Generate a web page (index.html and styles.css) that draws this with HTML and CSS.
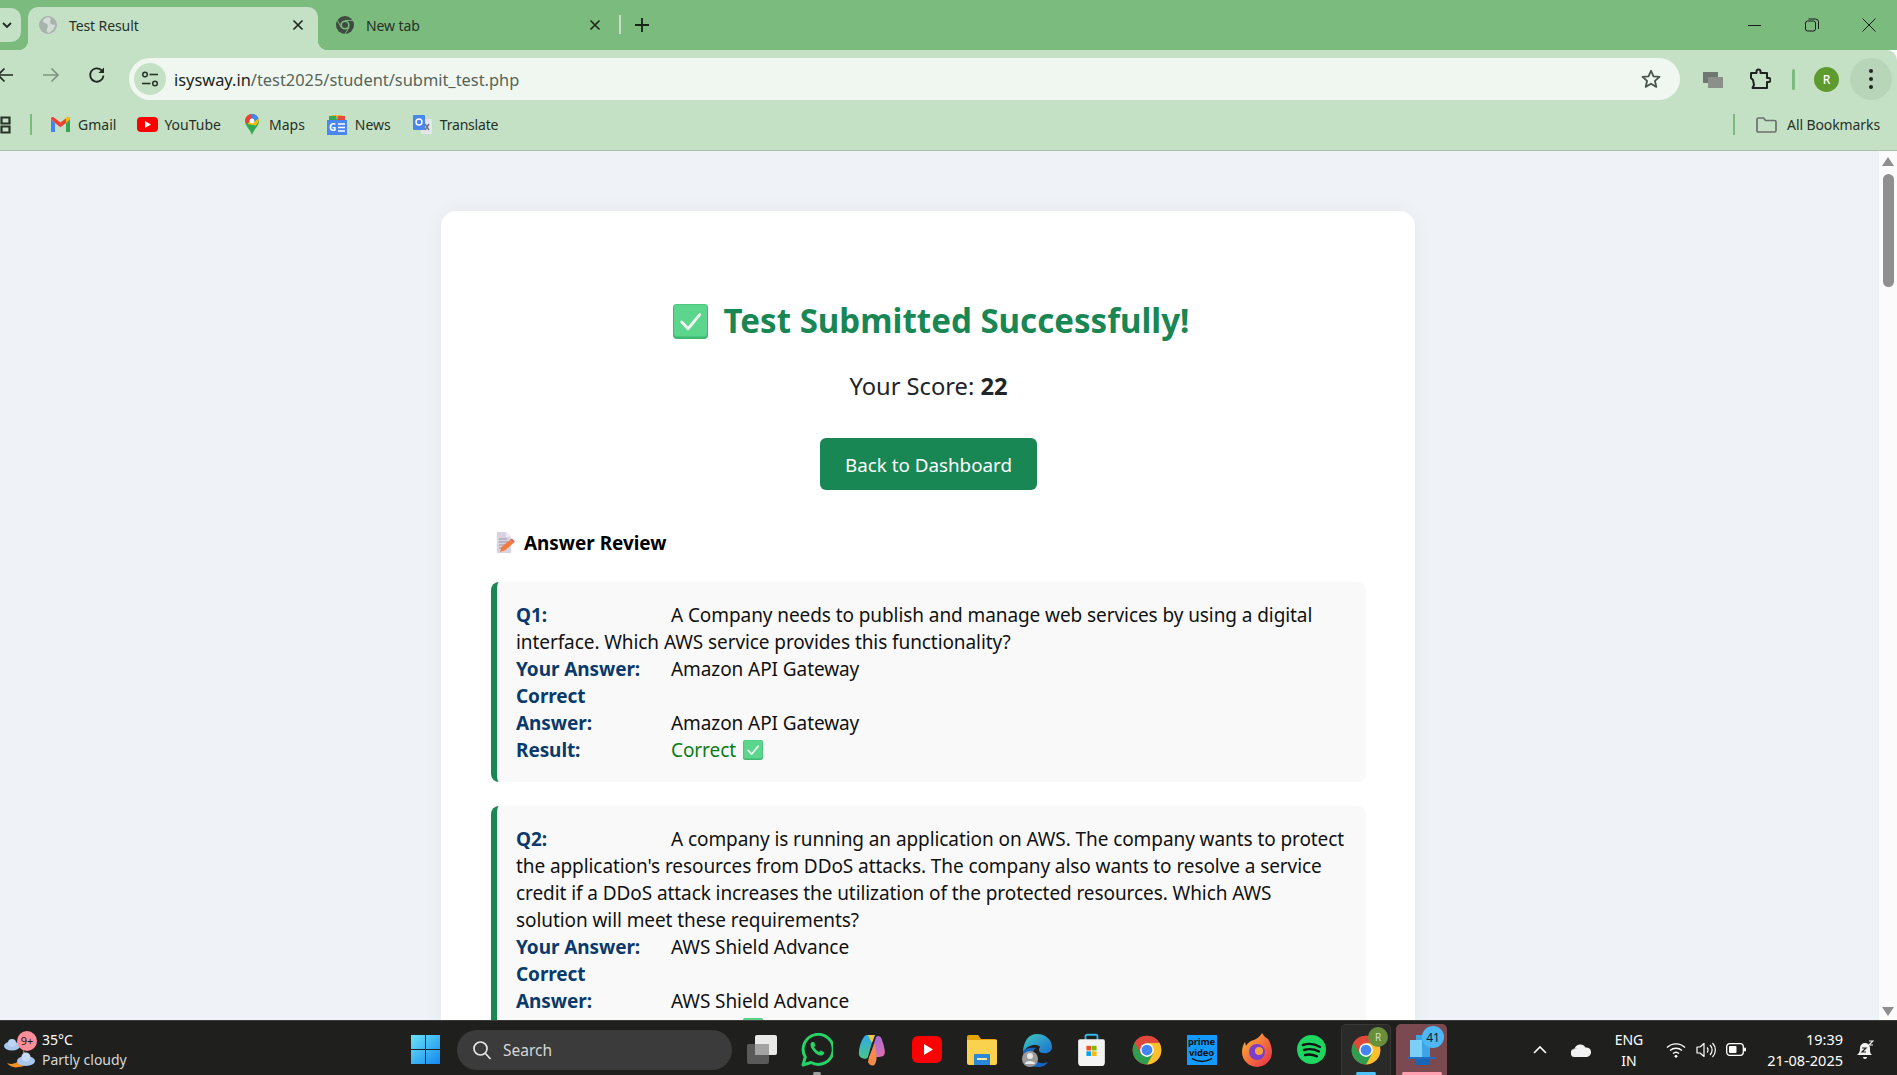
FILE: index.html
```html
<!DOCTYPE html>
<html lang="en">
<head>
<meta charset="utf-8">
<title>Test Result</title>
<link rel="stylesheet" href="styles.css">
</head>
<body>
<svg class="defs" width="0" height="0" aria-hidden="true">
  <defs>
    <symbol id="check" viewBox="0 0 36 36">
      <rect x="0" y="0" width="36" height="36" rx="4" fill="#3fb872"/>
      <rect x="1" y="0.5" width="34" height="33" rx="3.5" fill="#5cd68d"/>
      <path d="M9 18.5l6.5 7L27.5 11" fill="none" stroke="#eef8f0" stroke-width="3" stroke-linecap="round" stroke-linejoin="round"/>
    </symbol>
    <symbol id="chrome" viewBox="0 0 48 48">
      <circle cx="24" cy="24" r="23" fill="#db4437"/>
      <path d="M24 47a23 23 0 0 0 19.9-34.5H24z" fill="#fbc02d"/>
      <path d="M4.1 12.5A23 23 0 0 0 24 47l10-17.3L24 12.5z" fill="#2e9e4f"/>
      <path d="M24 1A23 23 0 0 0 4.1 12.5L14 30 24 12.5h19.9A23 23 0 0 0 24 1z" fill="#e0483b"/>
      <circle cx="24" cy="24" r="11" fill="#fff"/>
      <circle cx="24" cy="24" r="8.6" fill="#4285f4"/>
    </symbol>
  </defs>
</svg>
<div class="screen">

  <header class="tabstrip">
    <div class="tabsearch"><svg width="12" height="12" viewBox="0 0 12 12"><path d="M2 4l4 4 4-4" fill="none" stroke="#1f2a1f" stroke-width="1.8"/></svg></div>
    <div class="tab tab-active">
      <svg class="favicon" width="18" height="18" viewBox="0 0 18 18"><circle cx="9" cy="9" r="9" fill="#a9b3ad"/><path d="M9 1c-2 1-5 2-5 4s3 2 4 3 1 3 0 5 1 4 2 4c3-2 6-5 6-8-1-1-3 0-4-1s-1-3 0-5C11 2 10 1 9 1z" fill="#d3dcd5"/></svg>
      <span class="tab-title">Test Result</span>
      <svg class="tab-close" width="12" height="12" viewBox="0 0 12 12"><path d="M1.5 1.5l9 9m0-9l-9 9" stroke="#1f2a1f" stroke-width="1.7"/></svg>
    </div>
    <div class="tab">
      <svg class="favicon" width="18" height="18" viewBox="0 0 18 18"><circle cx="9" cy="9" r="9" fill="#3f4a40"/><circle cx="9" cy="9" r="4.6" fill="#7bbb7d"/><circle cx="9" cy="9" r="3" fill="#3f4a40"/><path d="M9 4.4h8M5 11.3L1.5 4.5M13 11.3L9 18" stroke="#7bbb7d" stroke-width="1"/></svg>
      <span class="tab-title">New tab</span>
      <svg class="tab-close" width="12" height="12" viewBox="0 0 12 12"><path d="M1.5 1.5l9 9m0-9l-9 9" stroke="#1f2a1f" stroke-width="1.7"/></svg>
    </div>
    <span class="tab-sep"></span>
    <svg class="newtab" width="14" height="14" viewBox="0 0 14 14"><path d="M7 0v14M0 7h14" stroke="#16211a" stroke-width="1.8"/></svg>
    <div class="winctl">
      <svg width="14" height="14" viewBox="0 0 14 14"><path d="M0 7.5h13" stroke="#1a1a1a" stroke-width="1"/></svg>
      <svg width="14" height="14" viewBox="0 0 14 14"><rect x="0.5" y="3" width="10" height="10" rx="2" fill="none" stroke="#1a1a1a"/><path d="M3.5 1h7a3 3 0 0 1 3 3v7" fill="none" stroke="#1a1a1a"/></svg>
      <svg width="14" height="14" viewBox="0 0 14 14"><path d="M0.5 0.5l13 13m0-13l-13 13" stroke="#1a1a1a" stroke-width="1"/></svg>
    </div>
  </header>

  <nav class="toolbar">
    <div class="navbtns">
      <svg class="navbtn" width="18" height="18" viewBox="0 0 18 18"><path d="M17 9H2M8.5 2.5L2 9l6.500 6.500" fill="none" stroke="#1f2a1f" stroke-width="1.700"/></svg>
      <svg class="navbtn" width="18" height="18" viewBox="0 0 18 18"><path d="M1 9h15M9.500 2.500L16 9l-6.500 6.500" fill="none" stroke="#7f9480" stroke-width="1.700"/></svg>
      <svg class="navbtn" width="18" height="18" viewBox="0 0 18 18"><path d="M15.500 9.500a6.700 6.700 0 1 1-2-5.300l2 2" fill="none" stroke="#1f2a1f" stroke-width="1.800"/><path d="M16 1.500V7h-5.500z" fill="#1f2a1f"/></svg>
    </div>
    <div class="omnibox">
      <span class="siteinfo"><svg width="18" height="18" viewBox="0 0 18 18"><circle cx="4" cy="4.500" r="2.300" fill="none" stroke="#28332a" stroke-width="1.500"/><path d="M8.500 4.500H17" stroke="#28332a" stroke-width="1.600"/><path d="M1 13.500h8.500" stroke="#28332a" stroke-width="1.600"/><circle cx="14" cy="13.500" r="2.300" fill="none" stroke="#28332a" stroke-width="1.500"/></svg></span>
      <span class="url"><span class="url-host">isysway.in</span>/test2025/student/submit_test.php</span>
      <svg class="star" width="22" height="22" viewBox="0 0 24 24"><path d="M12 3l2.700 6.100 6.600.6-5 4.400 1.500 6.500L12 17.200l-5.800 3.400 1.500-6.500-5-4.400 6.600-.6z" fill="none" stroke="#4a554c" stroke-width="2" stroke-linejoin="round"/></svg>
    </div>
    <div class="actions">
      <svg class="act-stack" width="20" height="18" viewBox="0 0 20 18"><rect x="0" y="2" width="15" height="11" fill="#6f7771"/><rect x="5" y="7" width="15" height="11" fill="#8a918b"/></svg>
      <svg class="act-puzzle" width="22" height="22" viewBox="0 0 22 22"><path d="M2 5h5.500V3.500a2 2 0 0 1 4 0V5H18v5h1.500a2 2 0 0 1 0 4H18v6H3.500l1.500-3-1-5-2-2z" fill="none" stroke="#1d241e" stroke-width="2" stroke-linejoin="round"/></svg>
      <span class="green-sep"></span>
      <span class="avatar">R</span>
      <span class="menubtn"><i></i><i></i><i></i></span>
    </div>
  </nav>

  <nav class="bookmarks">
    <svg class="apps" width="11" height="18" viewBox="0 0 11 18"><path d="M1.500 1.500h8v6h-8zM1.500 10.500h8v6h-8z" fill="none" stroke="#28332a" stroke-width="2.200"/></svg>
    <span class="bm-sep"></span>
    <a class="bm bm-gmail"><svg width="19" height="15" viewBox="0 0 19 15"><path d="M0 2v13h4V6z" fill="#4285f4"/><path d="M15 6v9h4V2z" fill="#34a853"/><path d="M0 2l4 4 5.500 4.200L15 6l4-4c0-2-2-2.500-3-1.500l-6.500 5L3 .5C2 -.5 0 0 0 2z" fill="#ea4335"/><path d="M15 6l4-4c0-2-2-2.500-3-1.500L15 1.300z" fill="#fbbc04"/></svg><span>Gmail</span></a>
    <a class="bm bm-yt"><svg width="21" height="15" viewBox="0 0 21 15"><rect width="21" height="15" rx="4" fill="#f00"/><path d="M8 4v7l6-3.500z" fill="#fff"/></svg><span>YouTube</span></a>
    <a class="bm bm-maps"><svg width="14" height="21" viewBox="0 0 14 21"><path d="M7 0a7 7 0 0 0-7 7c0 5 5 8 7 14 2-6 7-9 7-14a7 7 0 0 0-7-7z" fill="#34a853"/><path d="M1 3.500A7 7 0 0 1 7 0v4.500L2.500 10C1 8.500 0 8 0 7a7 7 0 0 1 1-3.500z" fill="#ea4335"/><path d="M7 0a7 7 0 0 1 6.500 4.500L9 8 7 4.500z" fill="#4285f4"/><path d="M2.500 10L5 7l4 1 4.500-3.500C14.500 7 13 9 11 11.500z" fill="#fbbc04"/><circle cx="7" cy="7" r="2.400" fill="#fff"/></svg><span>Maps</span></a>
    <a class="bm bm-news"><svg width="20" height="20" viewBox="0 0 20 20"><path d="M3 3l2-3h10l2 3z" fill="#e8b23a"/><path d="M2 1h7l1 4H2z" fill="#34a853"/><path d="M11 1h7v4h-8z" fill="#e34c3c"/><rect y="5" width="20" height="15" fill="#4a86ee"/><text x="2" y="16" class="news-g">G</text><path d="M11 9h7M11 12.500h7M11 16h7" stroke="#fff" stroke-width="1.700"/></svg><span>News</span></a>
    <a class="bm bm-tr"><svg width="19" height="20" viewBox="0 0 19 20"><rect x="8" y="4" width="11" height="15" fill="#e4e7ea"/><rect width="12" height="15" rx="1" fill="#4a86ee"/><circle cx="6" cy="7" r="3" fill="none" stroke="#fff" stroke-width="1.400"/><path d="M12 9l4 6m0-6l-4 6" stroke="#6b7278" stroke-width="1.400"/></svg><span>Translate</span></a>
    <span class="bm-fill"></span>
    <span class="bm-sep"></span>
    <a class="bm bm-all"><svg width="21" height="16" viewBox="0 0 21 16"><path d="M1 2.500a1.500 1.500 0 0 1 1.500-1.500h5l2 2.500h9a1.500 1.500 0 0 1 1.500 1.500v8.500a1.500 1.500 0 0 1-1.500 1.500h-16A1.500 1.500 0 0 1 1 13z" fill="none" stroke="#6b716c" stroke-width="1.700"/></svg><span>All Bookmarks</span></a>
  </nav>

  <div class="viewport">
    <main class="page">
      <section class="card">
        <h1 class="title"><svg class="title-check" width="35" height="35"><use href="#check"/></svg>Test Submitted Successfully!</h1>
        <p class="score">Your Score: <strong>22</strong></p>
        <div class="btnrow"><a class="btn">Back to Dashboard</a></div>
        <h2 class="review">
          <svg class="memo" width="18" height="21" viewBox="0 0 18 21"><path d="M0 0h9l5 5v16H0z" fill="#d9d2e0"/><path d="M9 0l5 5H9z" fill="#ecebf1"/><path d="M2 7h8M2 10h9M2 13h7M2 16h5" stroke="#9d95a8" stroke-width="1"/><path d="M3 20l1.500-5L13 8l3.500 3-8 7z" fill="#f47a3a"/><path d="M13 8l1.800-1.500 3 3L16.500 11z" fill="#e85d5d"/></svg>
          Answer Review
        </h2>

        <article class="qa">
          <span class="lbl">Q1:</span>A Company needs to publish and manage web services by using a digital interface. Which AWS service provides this functionality?<br>
          <span class="lbl">Your Answer:</span>Amazon API Gateway<br>
          <span class="lbl">Correct Answer:</span>Amazon API Gateway<br>
          <span class="lbl">Result:</span><span class="ok">Correct</span> <svg class="mini-check" width="20" height="20"><use href="#check"/></svg>
        </article>

        <article class="qa">
          <span class="lbl">Q2:</span>A company is running an application on AWS. The company wants to protect the application's resources from DDoS attacks. The company also wants to resolve a service credit if a DDoS attack increases the utilization of the protected resources. Which AWS solution will meet these requirements?<br>
          <span class="lbl">Your Answer:</span>AWS Shield Advance<br>
          <span class="lbl">Correct Answer:</span>AWS Shield Advance<br>
          <span class="lbl">Result:</span><span class="ok">Correct</span> <svg class="mini-check" width="20" height="20"><use href="#check"/></svg>
        </article>
      </section>
    </main>
    <aside class="scrollbar">
      <svg width="12" height="9" viewBox="0 0 12 9"><path d="M6 0l6 9H0z" fill="#8f8f8f"/></svg>
      <span class="thumb"></span>
      <span class="track-fill"></span>
      <svg width="12" height="9" viewBox="0 0 12 9"><path d="M6 9L0 0h12z" fill="#8f8f8f"/></svg>
    </aside>
  </div>

  <footer class="taskbar">
    <div class="weather">
      <span class="weather-icon">
        <svg width="32" height="38" viewBox="0 0 32 38"><path d="M20 18a12 12 0 0 1-16 14 12 12 0 0 0 12 4c6 0 9-4 9-8z" fill="#f0912a"/><ellipse cx="9" cy="15" rx="8" ry="4.500" fill="#a9c6ee"/><ellipse cx="9" cy="12" rx="4" ry="4" fill="#bdd4f3"/><ellipse cx="23" cy="30" rx="9" ry="5" fill="#a9c6ee"/><ellipse cx="23" cy="26" rx="4.500" ry="4.500" fill="#c7dbf5"/></svg>
        <span class="badge-9">9+</span>
      </span>
      <span class="weather-text"><span class="temp">35°C</span><span class="cond">Partly cloudy</span></span>
    </div>
    <svg class="winlogo" width="29" height="29" viewBox="0 0 29 29"><defs><linearGradient id="w" x1="0" y1="0" x2="1" y2="1"><stop offset="0" stop-color="#6be3f7"/><stop offset="1" stop-color="#1488f0"/></linearGradient></defs><path d="M0 0h14v14H0zM15 0h14v14H15zM0 15h14v14H0zM15 15h14v14H15z" fill="url(#w)"/></svg>
    <div class="search"><svg width="20" height="20" viewBox="0 0 20 20"><circle cx="8.500" cy="8.500" r="6.500" fill="none" stroke="#e8e8e8" stroke-width="1.700"/><path d="M13.500 13.500l5 5.500" stroke="#e8e8e8" stroke-width="1.700"/></svg><span>Search</span></div>
    <svg class="taskview" width="30" height="29" viewBox="0 0 30 29"><rect x="0" y="9" width="22" height="20" rx="2" fill="#5a5a5a"/><rect x="8" y="0" width="22" height="20" rx="2" fill="#e9e9e9"/><rect x="8" y="9" width="14" height="11" fill="#a3a3a3"/></svg>
    <div class="apps-row">
      <span class="app"><svg width="32" height="34" viewBox="0 0 32 34"><path d="M2 32l2.300-8A15 15 0 1 1 10 29.500z" fill="none" stroke="#25d366" stroke-width="3" stroke-linejoin="round"/><path d="M11 9c-2 1-2 4 0 7s5 6 8 6.500 5-2 4-3.500l-3.500-1.500-1.500 1.500c-2-1-4-3-5-5l1.500-1.500L13 9z" fill="#25d366"/></svg><i class="dot"></i></span>
      <span class="app"><svg width="28" height="33" viewBox="0 0 28 33"><defs><linearGradient id="cp1" x1="0" y1="0" x2="0" y2="1"><stop offset="0" stop-color="#2fa9e8"/><stop offset="1" stop-color="#4bc48a"/></linearGradient><linearGradient id="cp2" x1="0" y1="0" x2="1" y2="1"><stop offset="0" stop-color="#8a6de8"/><stop offset="1" stop-color="#ee6fa8"/></linearGradient></defs><path d="M8 2h8l-6 22c-1 3-8 2-9-2-1-6 3-18 7-20z" fill="url(#cp1)"/><path d="M18 4c2-2 5-1 6 3 2 6 4 13 2 15-1 2-6 2-9 2L11 26z" fill="url(#cp2)"/><path d="M11 24l6-14c1 8 3 16 0 21-2 3-6 1-7-2z" fill="#f58a4b"/><path d="M10 2h7l-3 8z" fill="#f6c64a"/></svg></span>
      <span class="app"><svg width="30" height="27" viewBox="0 0 30 27"><rect width="30" height="27" rx="6" fill="#f00"/><path d="M12 8v11l9-5.500z" fill="#fff"/></svg></span>
      <span class="app"><svg width="30" height="30" viewBox="0 0 30 30"><path d="M0 2a2 2 0 0 1 2-2h9l3 4h14a2 2 0 0 1 2 2v4H0z" fill="#e5a50a"/><path d="M0 5h30v23a2 2 0 0 1-2 2H2a2 2 0 0 1-2-2z" fill="#fbd24e"/><path d="M8 19h14a1 1 0 0 1 1 1v10H7V20a1 1 0 0 1 1-1z" fill="#2b87d8"/><rect x="10" y="23" width="10" height="2" fill="#fbe9a0"/></svg></span>
      <span class="app"><svg width="30" height="34" viewBox="0 0 30 34"><defs><linearGradient id="ed" x1="0" y1="0" x2="1" y2="1"><stop offset="0" stop-color="#3fc9c0"/><stop offset="1" stop-color="#1a6fd0"/></linearGradient></defs><path d="M15 1c9 0 15 6 15 13 0 5-5 7-9 6-4 0-5-3-3-6-3-4-14-2-17 6C1 8 7 1 15 1z" fill="url(#ed)"/><path d="M1 20c0 8 7 14 15 14 5 0 8-2 10-5-7 3-15 0-15-8 0-3 1-5 3-6-5-1-13 0-13 5z" fill="#1565c0"/><circle cx="8" cy="26" r="8" fill="#9b9b9b"/><circle cx="8" cy="23" r="3" fill="#e8e8e8"/><path d="M3 31c0-4 10-4 10 0z" fill="#e8e8e8"/></svg></span>
      <span class="app"><svg width="29" height="35" viewBox="0 0 29 38"><path d="M8 9V5a2 2 0 0 1 2-2h9a2 2 0 0 1 2 2v4" fill="none" stroke="#35b7e6" stroke-width="2"/><path d="M0 10a2 2 0 0 1 2-2h25a2 2 0 0 1 2 2v23a4 4 0 0 1-4 4H4a4 4 0 0 1-4-4z" fill="#f4f4f4"/><rect x="9" y="15" width="5" height="5" fill="#f25022"/><rect x="15" y="15" width="5" height="5" fill="#7fba00"/><rect x="9" y="21" width="5" height="5" fill="#00a4ef"/><rect x="15" y="21" width="5" height="5" fill="#ffb900"/></svg></span>
      <span class="app"><svg width="30" height="30"><use href="#chrome"/></svg></span>
      <span class="app"><span class="prime"><span>prime</span><span>video</span><svg width="22" height="5" viewBox="0 0 22 5"><path d="M1 .5c6 4 14 4 20 0" fill="none" stroke="#111" stroke-width="1.500"/></svg></span></span>
      <span class="app"><svg width="30" height="34" viewBox="0 0 30 34"><defs><linearGradient id="ff" x1="0" y1="0" x2="1" y2="1"><stop offset="0" stop-color="#ffbd2e"/><stop offset="1" stop-color="#e8274b"/></linearGradient></defs><path d="M20 0c2 3 3 4 6 6 2 3 4 8 4 13a15 15 0 0 1-30 0c0-4 1-7 3-10l1 4c1-2 3-4 5-5 4-1 8-3 11-8z" fill="url(#ff)"/><circle cx="15" cy="19" r="8" fill="#7b3fcb"/><circle cx="17" cy="18" r="4" fill="#f8a13a"/></svg></span>
      <span class="app"><svg width="29" height="29" viewBox="0 0 29 29"><circle cx="14.500" cy="14.500" r="14.500" fill="#1ed760"/><path d="M6 10c6-2 12-1 17 2M7 15c5-1.500 10-1 15 1.500M8 20c4-1 8-.5 12 1.300" fill="none" stroke="#121212" stroke-width="2.400" stroke-linecap="round"/></svg></span>
      <span class="app app-running"><svg width="30" height="30"><use href="#chrome"/></svg><span class="avatar-mini">R</span><i class="run run-blue"></i></span>
      <span class="app app-mail"><svg width="28" height="30" viewBox="0 0 28 30"><rect x="8" y="0" width="14" height="22" fill="#3da4e6"/><rect x="2" y="5" width="12" height="17" fill="#7dd0f5"/><path d="M0 22h28v2H0z" fill="#1e6fc2"/><rect x="8" y="24" width="14" height="6" fill="#1666b5"/></svg><span class="badge-41">41</span><i class="run run-pink"></i></span>
    </div>
    <div class="tray">
      <svg class="tray-chev" width="14" height="9" viewBox="0 0 14 9"><path d="M1 8l6-6 6 6" fill="none" stroke="#fff" stroke-width="1.600"/></svg>
      <svg class="tray-cloud" width="20" height="14" viewBox="0 0 20 14"><path d="M4 14a4 4 0 0 1-.500-8 6 6 0 0 1 11-1.500A4.500 4.500 0 0 1 16 14z" fill="#f2f2f2"/><path d="M0 9a4 4 0 0 1 7-2.500L5 5 3.500 6A4 4 0 0 0 0 9z" fill="#9a9a9a"/></svg>
      <div class="lang"><span>ENG</span><span>IN</span></div>
      <svg class="tray-wifi" width="20" height="16" viewBox="0 0 20 16"><path d="M1 5.500a13 13 0 0 1 18 0M4 8.500a9 9 0 0 1 12 0M7 11.500a4.500 4.500 0 0 1 6 0" fill="none" stroke="#fff" stroke-width="1.400"/><circle cx="10" cy="14.300" r="1.400" fill="#fff"/></svg>
      <svg class="tray-vol" width="20" height="16" viewBox="0 0 20 16"><path d="M1 5h3l4-3.500v13L4 11H1z" fill="none" stroke="#fff" stroke-width="1.200" stroke-linejoin="round"/><path d="M11 5.500a3.500 3.500 0 0 1 0 5M14 3a7 7 0 0 1 0 10M16.500 1a10 10 0 0 1 0 14" fill="none" stroke="#fff" stroke-width="1.200"/></svg>
      <svg class="tray-bat" width="20" height="13" viewBox="0 0 20 13"><rect x="0.700" y="0.700" width="16.600" height="11.600" rx="3" fill="none" stroke="#fff" stroke-width="1.300"/><rect x="3" y="3" width="7.500" height="7" rx="1" fill="#fff"/><rect x="18" y="4.500" width="2" height="4" rx="1" fill="#fff"/></svg>
      <div class="clock"><span>19:39</span><span>21-08-2025</span></div>
      <svg class="tray-bell" width="17" height="20" viewBox="0 0 17 20"><path d="M8 3a5 5 0 0 0-5 5c0 4-1 5-3 7h15c-2-2-2-3-2-7a5 5 0 0 0-5-5z" fill="#f4f4f4"/><path d="M6 17h4a2 2 0 0 1-4 0z" fill="#f4f4f4"/><path d="M5 8h4l-4 4h4" fill="none" stroke="#1f1f1f" stroke-width="1.200"/><path d="M12 1h4l-4 4h4" fill="none" stroke="#f4f4f4" stroke-width="1.200"/></svg>
    </div>
  </footer>
</div>
</body>
</html>
```

FILE: styles.css
```css
* { box-sizing: border-box; }
html, body { margin: 0; padding: 0; height: 100%; overflow: hidden; }
body { font-family: "Noto Sans", "Open Sans", sans-serif; color: #212529; }
.defs { display: block; height: 0; }
svg { display: block; flex: none; }
.screen { width: 1897px; height: 1075px; display: flex; flex-direction: column; overflow: hidden; }

/* tabs */
.tabstrip { height: 50px; flex: none; background: #7bbb7d; display: flex; align-items: flex-end; position: relative; }
.tabsearch { width: 21px; height: 34px; margin-bottom: 8px; background: #c5e1c5; border-radius: 0 10px 10px 0; display: flex; align-items: center; justify-content: flex-end; padding-right: 8px; }
.tab { height: 43px; display: flex; align-items: center; font-size: 14px; color: #263128; position: relative; padding-bottom: 7px !important; }
.tab-active { width: 290px; margin-left: 7px; padding: 0 14px 0 11px; background: #c5e1c5; border-radius: 10px 10px 0 0; }
.tab-active::before, .tab-active::after { content: ""; position: absolute; bottom: 0; width: 10px; height: 10px; }
.tab-active::before { left: -10px; background: radial-gradient(circle at 0 0, transparent 10px, #c5e1c5 10.5px); }
.tab-active::after { right: -10px; background: radial-gradient(circle at 100% 0, transparent 10px, #c5e1c5 10.5px); }
.tab:not(.tab-active) { width: 297px; padding: 0 14px 0 18px; }
.favicon { margin-right: 12px; }
.tab-title { flex: 1; letter-spacing: -0.1px; }
.tab-sep { width: 2px; height: 19px; margin: 0 0 16px 4px; background: #c5e1c5; }
.newtab { margin: 0 0 18px 14px; }
.winctl { margin-left: auto; display: flex; gap: 43px; padding: 0 21px 18px 0; }

/* toolbar */
.toolbar { height: 50px; flex: none; background: #c5e1c5; display: flex; align-items: center; border-radius: 0 10px 0 0; }
.navbtns { display: flex; margin-left: -18px; width: 147px; flex: none; }
.navbtn { margin: 0 14px; }
.omnibox { width: 1551px; height: 42px; margin-top: 10px; margin-bottom: 2px; flex: none; background: #f0f7f0; border-radius: 21px; display: flex; align-items: center; padding: 0 18px 0 5px; }
.siteinfo { width: 32px; height: 32px; border-radius: 50%; background: #c5e1c5; display: flex; align-items: center; justify-content: center; }
.url { flex: 1; margin-left: 8px; font-size: 16.400px; color: #566558; }
.url-host { color: #1b241d; }
.actions { display: flex; align-items: center; margin-top: 8px; flex: 1; padding-left: 23px; }
.act-puzzle { margin-left: 26px; }
.green-sep { width: 3px; height: 21px; margin-left: 21px; background: #7bbb7d; border-radius: 2px; }
.avatar { width: 25px; height: 25px; margin-left: 19px; border-radius: 50%; background: #5f9a2e; color: #fff; font-size: 12px; display: flex; align-items: center; justify-content: center; font-weight: 500; }
.menubtn { width: 42px; height: 42px; margin-left: 11px; border-radius: 50%; background: #b8d4b9; display: flex; flex-direction: column; align-items: center; justify-content: center; gap: 4px; }
.menubtn i { width: 4px; height: 4px; background: #1d241e; border-radius: 50%; }

/* bookmarks */
.bookmarks { height: 51px; flex: none; background: #c5e1c5; border-bottom: 1px solid #a9bfa9; display: flex; align-items: center; font-size: 14px; color: #263128; padding-bottom: 1px; }
.apps { margin-right: 19px; }
.bm-sep { width: 2px; height: 21px; background: #7bbb7d; }
.bm { display: flex; align-items: center; gap: 8px; }
.bm-gmail { margin-left: 19px; }
.bm-yt { margin-left: 21px; gap: 6px; }
.bm-maps { margin-left: 24px; gap: 10px; }
.bm-news { margin-left: 22px; }
.bm-tr { margin-left: 22px; gap: 8px; letter-spacing: -0.2px; }
.bm-fill { flex: 1; }
.bm-all { margin: 0 17px 0 21px; gap: 10px; letter-spacing: -0.1px; }
.news-g { font: 700 10px "Noto Sans", sans-serif; fill: #fff; }

/* page */
.viewport { flex: 1; min-height: 0; display: flex; background: #eff3f8; }
.page { flex: 1; min-width: 0; overflow: hidden; padding: 60px 464px 0 441px; }
.card { background: #fff; border-radius: 15px; box-shadow: 0 0 20px rgba(0, 0, 0, 0.05); padding: 85px 49px 40px 50px; }
.title { margin: 0; display: flex; justify-content: center; align-items: center; gap: 16px; font-size: 33.100px; line-height: 50px; font-weight: 700; color: #198754; padding-left: 5px; height: 50px; }
.title-check { width: 35px; height: 35px; }
.score { margin: 20px 0 0; text-align: center; font-size: 23.700px; line-height: 40px; color: #212529; }
.score strong { font-weight: 700; }
.btnrow { margin-top: 32px; display: flex; justify-content: center; }
.btn { width: 217px; height: 52px; background: #198754; color: #fff; border-radius: 6px; font-size: 18.800px; display: flex; align-items: center; justify-content: center; padding-top: 2px; }
.review { margin: 35px 0 0; height: 36px; display: flex; align-items: center; gap: 9px; padding-left: 6px; font-size: 18.900px; font-weight: 700; color: #000; }
.qa { margin-top: 21px; background: #f9f9f9; border-left: 6px solid #198754; border-radius: 8px; padding: 20px 21px 18px 19px; font-size: 19px; line-height: 27px; letter-spacing: -0.08px; color: #111; }
.qa + .qa { margin-top: 24px; }
.lbl { display: inline-block; width: 150px; margin-right: 5px; color: #0a3a6b; font-weight: 700; }
.ok { color: #0a7d16; }
.mini-check { display: inline-block; width: 20px; height: 20px; vertical-align: -3px; margin-left: 2px; }
.memo { margin-top: -1px; }

/* scrollbar */
.scrollbar { width: 18px; flex: none; background: #fbfbfb; display: flex; flex-direction: column; align-items: center; padding: 6px 0 4px; }
.thumb { width: 11px; height: 113px; margin-top: 8px; border-radius: 6px; background: #8f8f8f; }
.track-fill { flex: 1; }

/* taskbar */
.taskbar { height: 55px; flex: none; background: #1f1f1d; border-top: 1px solid #3a3a38; display: flex; align-items: center; color: #fff; padding-top: 3px; }
.weather { width: 411px; flex: none; display: flex; align-items: center; padding-left: 3px; }
.weather-icon { width: 32px; height: 38px; position: relative; }
.badge-9 { position: absolute; left: 14px; top: 0; width: 20px; height: 20px; border-radius: 50%; background: #ff8e99; color: #1a1a1a; font-size: 11px; display: flex; align-items: center; justify-content: center; }
.weather-text { margin-left: 7px; display: flex; flex-direction: column; font-size: 14px; line-height: 20px; }
.cond { color: #d8d8d8; }
.search { width: 275px; height: 40px; margin-left: 17px; flex: none; background: #3b3b3b; border-radius: 20px; display: flex; align-items: center; gap: 11px; padding-left: 15px; font-size: 15.500px; color: #d6d6d6; }
.taskview { margin-left: 15px; }
.apps-row { display: flex; margin-left: 12px; height: 51px; }
.app { width: 55px; height: 51px; display: flex; align-items: center; justify-content: center; position: relative; flex: none; }
.dot { position: absolute; bottom: 0; width: 8px; height: 3px; border-radius: 2px; background: #9d9d9d; }
.prime { width: 30px; height: 30px; background: #1399ff; color: #111; display: flex; flex-direction: column; align-items: center; justify-content: center; font-size: 9.500px; line-height: 11px; font-weight: 700; letter-spacing: -0.2px; }
.app-running { width: 50px; margin-left: 2px; background: #2a2b28; border: 1px solid #383936; border-bottom: 0; border-radius: 5px 5px 0 0; }
.avatar-mini { position: absolute; right: 2px; top: 2px; width: 20px; height: 20px; border-radius: 50%; background: #6a8f3c; color: #cfe0b8; font-size: 10px; display: flex; align-items: center; justify-content: center; }
.run { position: absolute; bottom: 0; height: 3px; border-radius: 2px; }
.run-blue { width: 20px; background: #4fc3f7; }
.app-mail { width: 51px; margin-left: 5px; background: #7a4a50; border-radius: 5px 5px 0 0; }
.run-pink { width: 40px; background: #ff9fb0; }
.badge-41 { position: absolute; right: 3px; top: 2px; width: 22px; height: 22px; border-radius: 50%; background: #4db8f5; color: #10202c; font-size: 12px; display: flex; align-items: center; justify-content: center; }
.tray { flex: 1; display: flex; align-items: center; position: relative; font-size: 14px; line-height: 21px; }
.tray-chev { margin-left: 86px; }
.tray-cloud { margin-left: 24px; }
.lang { width: 48px; margin-left: 14px; display: flex; flex-direction: column; align-items: center; }
.tray-wifi { margin-left: 13px; }
.tray-vol { margin-left: 10px; }
.tray-bat { margin-left: 10px; }
.clock { width: 84px; margin-left: 13px; display: flex; flex-direction: column; align-items: flex-end; font-size: 14.500px; }
.tray-bell { margin-left: 14px; }
```
